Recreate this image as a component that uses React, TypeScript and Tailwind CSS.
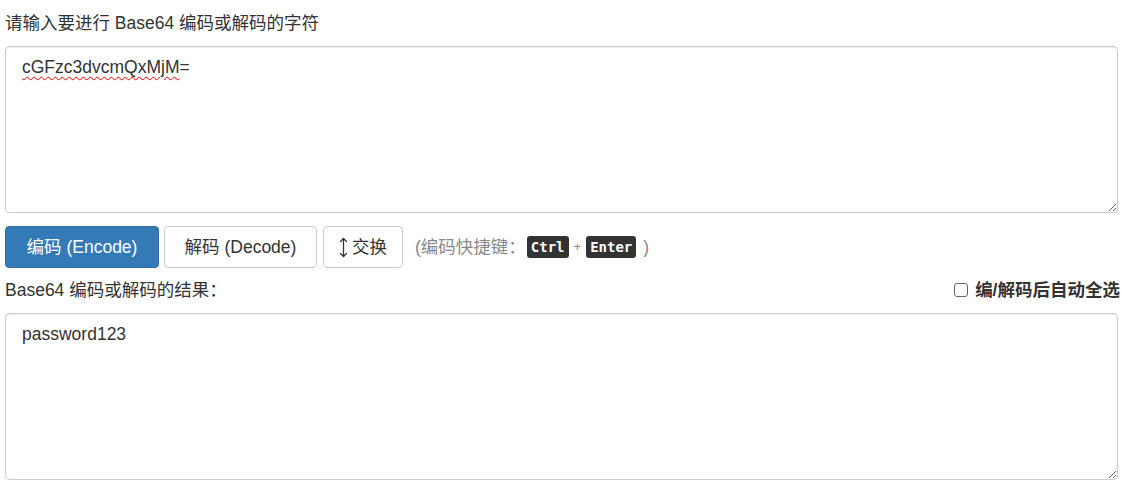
import React from "react";

const font = { fontFamily: '"Liberation Sans", "Noto Sans CJK SC", sans-serif' };
const mono = { fontFamily: '"DejaVu Sans Mono", "Liberation Mono", monospace' };

export default function App() {
  return (
    <div className="w-[1125px] h-[482px] bg-white text-[#333] px-[5px] pt-[11px] text-[17.5px]" style={font}>
      <div className="leading-[24px] h-[24px]">请输入要进行 Base64 编码或解码的字符</div>
      <div className="relative mt-[11px]">
        <textarea
          className="block w-[1113px] h-[167px] border border-[#ccc] rounded-[4px] shadow-[inset_0_1px_1px_rgba(0,0,0,0.075)] px-[16px] pt-[8px] text-[17.5px] leading-[24px] text-[#333] outline-none resize-y"
          style={font}
          defaultValue="cGFzc3dvcmQxMjM="
          spellCheck={false}
        />
        <span
          className="pointer-events-none absolute left-[17px] top-[9px] text-[17.5px] leading-[24px] text-transparent underline decoration-wavy decoration-[#e00] decoration-[1px] underline-offset-[3px]"
          style={font}
        >
          cGFzc3dvcmQxMjM
        </span>
      </div>
      <div className="mt-[13px] flex items-center h-[42px]">
        <button className="h-[42px] w-[154px] rounded-[4px] bg-[#337ab7] border border-[#2e6da4] text-white text-[17.5px]" style={font}>
          编码 (Encode)
        </button>
        <button className="ml-[5px] h-[42px] w-[153px] rounded-[4px] bg-white border border-[#ccc] text-[#333] text-[17.5px]" style={font}>
          解码 (Decode)
        </button>
        <button className="ml-[6px] h-[42px] w-[80px] rounded-[4px] bg-white border border-[#ccc] text-[#333] text-[17.5px] flex items-center justify-center gap-[4px]" style={font}>
          <svg width="9" height="21" viewBox="0 0 9 21" fill="none" stroke="#333" strokeWidth="1.3" strokeLinecap="round" strokeLinejoin="round">
            <path d="M4.5 1.5 V19.5" />
            <path d="M1.5 4.5 L4.5 1.5 L7.5 4.5" />
            <path d="M1.5 16.5 L4.5 19.5 L7.5 16.5" />
          </svg>
          交换
        </button>
        <div className="ml-[12px] flex items-center text-[#888] text-[17.5px]">
          <span>(编码快捷键：</span>
          <kbd className="ml-[1px] bg-[#333] text-white rounded-[3px] px-[4px] h-[22px] leading-[22px] text-[14px] font-bold" style={mono}>Ctrl</kbd>
          <span className="mx-[5px] text-[13px]">+</span>
          <kbd className="bg-[#333] text-white rounded-[3px] px-[4px] h-[22px] leading-[22px] text-[14px] font-bold" style={mono}>Enter</kbd>
          <span className="ml-[7px]">)</span>
        </div>
      </div>
      <div className="mt-[10px] flex items-center justify-between h-[24px]">
        <span>Base64 编码或解码的结果：</span>
        <label className="flex items-center font-bold">
          <input type="checkbox" className="w-[14px] h-[14px] mr-[7px] appearance-none border border-[#666] rounded-[3px] bg-white" />
          编/解码后自动全选
        </label>
      </div>
      <textarea
        className="mt-[11px] block w-[1113px] h-[167px] border border-[#ccc] rounded-[4px] shadow-[inset_0_1px_1px_rgba(0,0,0,0.075)] px-[16px] pt-[8px] text-[17.5px] leading-[24px] text-[#333] outline-none resize-y"
        style={font}
        defaultValue="password123"
      />
    </div>
  );
}
